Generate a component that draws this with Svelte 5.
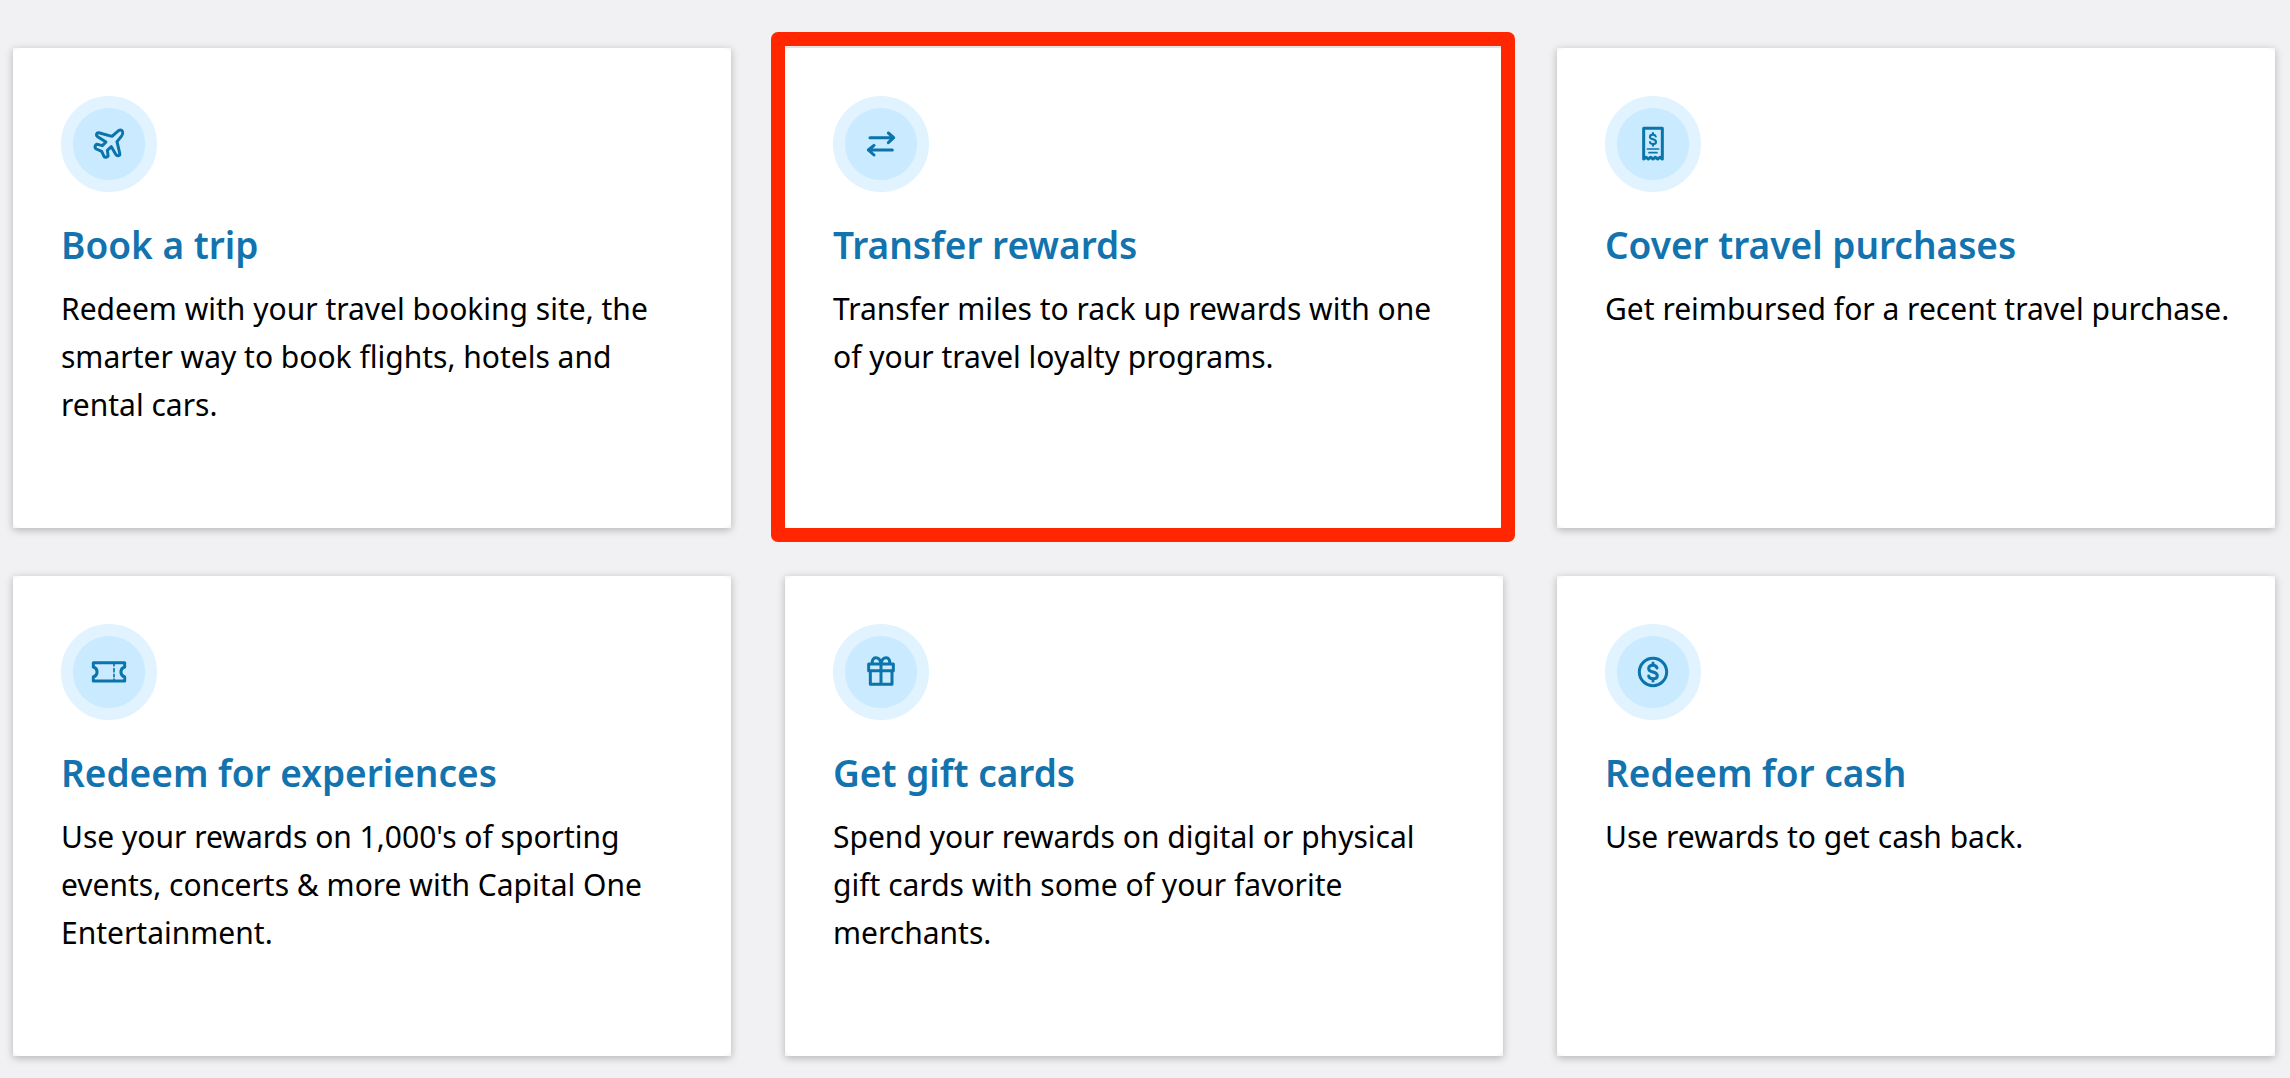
<script>
    const dollar = 'M12-12C10-18 6-20 0-20C-8-20-13-16-13-10C-13-4-8-2 0 0C8 2 13 5 13 11C13 17 8 20 0 20C-6 20-12 18-13 12M0-27V-20M0 20V27'

    const cards = [
        {
            icon: 'plane',
            title: 'Book a trip',
            text: 'Redeem with your travel booking site, the smarter way to book flights, hotels and rental cars.'
        },
        {
            icon: 'transfer',
            title: 'Transfer rewards',
            text: 'Transfer miles to rack up rewards with one of your travel loyalty programs.',
            highlighted: true
        },
        {
            icon: 'receipt',
            title: 'Cover travel purchases',
            text: 'Get reimbursed for a recent travel purchase.'
        },
        {
            icon: 'ticket',
            title: 'Redeem for experiences',
            text: "Use your rewards on 1,000's of sporting events, concerts & more with Capital One Entertainment."
        },
        {
            icon: 'gift',
            title: 'Get gift cards',
            text: 'Spend your rewards on digital or physical gift cards with some of your favorite merchants.'
        },
        {
            icon: 'coin',
            title: 'Redeem for cash',
            text: 'Use rewards to get cash back.'
        }
    ]
</script>

<svelte:head>
    <title>Redeem rewards</title>
</svelte:head>

<main>
    <ul>
        {#each cards as card}
            <li class:highlighted={card.highlighted}>
                <article>
                    <span class="badge">
                        <svg viewBox="0 0 144 144" aria-hidden="true">
                            {#if card.icon === 'plane'}
                                <path d="M110 31C106 29 101 31 98 34L81 49L44 39C40 38 36 39 35 42C34 45 35 48 38 50L63 66L52 77L38 73C34 72 31 76 30 80C30 83 31 85 34 87L50 94L57 109C58 112 62 112 65 111C68 110 70 107 69 104L67 91L79 80L93 104C95 107 98 108 101 107C104 106 105 103 104 99L96 65L109 49C113 44 115 35 110 31Z" />
                            {:else if card.icon === 'transfer'}
                                <path d="M39 53H110M94 39L110 53L94 68M106 90H34M51 76L34 90L51 105" />
                            {:else if card.icon === 'receipt'}
                                <path d="M44 117V25H100V117L93 112L86 117L79 112L72 117L65 112L58 117L51 112Z" />
                                <path d={dollar} transform="translate(72 58) scale(0.7)" />
                                <path class="thin" d="M55 87H89M60 98H84" />
                            {:else if card.icon === 'ticket'}
                                <path d="M25 44H119V57C104 62 104 81 119 87V99H25V87C40 81 40 62 25 57Z" />
                                <path class="thin" d="M87 48V53M87 62V71M87 79V86M87 93V97" />
                            {:else if card.icon === 'gift'}
                                <path d="M35 48H109V68H35ZM40 68V109H105V68M72 48V109M46 46C43 25 67 23 72 46C77 23 101 25 98 46" />
                            {:else}
                                <circle cx="72" cy="72" r="41" />
                                <path d={dollar} transform="translate(72 72)" />
                            {/if}
                        </svg>
                    </span>
                    <h2><a href="#{card.icon}">{card.title}</a></h2>
                    <p>{card.text}</p>
                </article>
            </li>
        {/each}
    </ul>
</main>

<style>
    :global(body) {
        margin: 0;
        background: #f1f1f3;
    }
    main {
        padding: 48px 15px 22px 13px;
        font-family: 'Noto Sans', 'Open Sans', sans-serif;
    }
    ul {
        display: grid;
        grid-template-columns: repeat(3, 1fr);
        gap: 48px 54px;
        margin: 0;
        padding: 0;
        list-style: none;
    }
    li {
        position: relative;
        display: flex;
        min-height: 480px;
        background: #f7f7f8;
        box-shadow: 0 2px 8px rgba(0, 0, 0, 0.26);
    }
    .highlighted::after {
        content: '';
        position: absolute;
        inset: -16px -12px -14px -14px;
        border: 14px solid #ff2600;
        border-radius: 7px;
        pointer-events: none;
    }
    article {
        flex: 1;
        box-sizing: border-box;
        padding: 48px 42px 48px 48px;
        border-radius: 8px;
        background: #fff;
    }
    .badge {
        display: flex;
        align-items: center;
        justify-content: center;
        box-sizing: border-box;
        width: 96px;
        height: 96px;
        border: 12px solid #e0f3fe;
        border-radius: 50%;
        background: #c9eaff;
    }
    svg {
        width: 48px;
        height: 48px;
        fill: none;
        stroke: #0b74aa;
        stroke-width: 9;
        stroke-linecap: round;
        stroke-linejoin: round;
    }
    .thin {
        stroke-width: 5;
    }
    h2 {
        margin: 29px 0 16px;
        font-size: 37px;
        line-height: 48px;
        font-weight: 600;
    }
    a {
        color: #1273ae;
        text-decoration: none;
    }
    a:hover {
        text-decoration: underline;
    }
    p {
        margin: 0;
        font-size: 30px;
        line-height: 48px;
        color: #000;
    }
</style>
